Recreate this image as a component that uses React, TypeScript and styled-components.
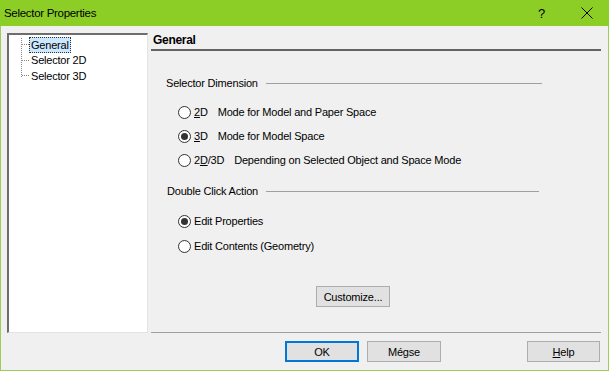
import React from "react";
import styled, { createGlobalStyle } from "styled-components";

const Global = createGlobalStyle`
  html, body { margin: 0; padding: 0; background: #f0f0f0; }
  body { font-family: "Liberation Sans", Arial, sans-serif; font-size: 11px; color: #000; letter-spacing: -0.2px; }
  * { box-sizing: border-box; }
`;

const Window = styled.div`
  width: 609px;
  height: 371px;
  display: flex;
  flex-direction: column;
  background: #f0f0f0;
  border: 1px solid #9ccc5c;
  border-top: none;
`;

const TitleBar = styled.div`
  height: 26px;
  background: #8cce26;
  display: flex;
  align-items: center;
  padding-left: 4px;
  margin: 0 -1px;
  font-size: 11.5px;
  letter-spacing: -0.3px;
`;

const Title = styled.div`
  flex: 1;
`;

const TitleButton = styled.div`
  width: 45px;
  height: 26px;
  display: flex;
  align-items: center;
  justify-content: center;
  font-size: 13px;
`;

const Body = styled.div`
  flex: 1;
  display: flex;
  padding: 7px 7px 0 6px;
`;

const Tree = styled.div`
  width: 141px;
  height: 300px;
  background: #fff;
  border-top: 2px solid #6d6d6d;
  border-left: 2px solid #6d6d6d;
  border-right: 1px solid #e3e3e3;
  border-bottom: 1px solid #e3e3e3;
  padding: 2px 0 0 0;
  position: relative;
`;

const TreeItem = styled.div`
  position: relative;
  height: 15.5px;
  display: flex;
  align-items: center;
  padding-left: 20px;
`;

const TreeLabel = styled.span<{ $selected?: boolean }>`
  padding: 0 1px;
  line-height: 14px;
  border: 1px ${(p) => (p.$selected ? "dotted #333" : "solid transparent")};
  background: ${(p) => (p.$selected ? "#cce8ff" : "transparent")};
`;

const TreeConnectors = styled.svg`
  position: absolute;
  left: 0;
  top: 0;
`;

const Pane = styled.div`
  flex: 1;
  display: flex;
  flex-direction: column;
  padding-left: 3px;
`;

const PaneHeader = styled.div`
  font-weight: bold;
  font-size: 12px;
  letter-spacing: -0.3px;
  padding: 0 0 2px 2px;
  border-bottom: 2px solid #646464;
`;

const PaneContent = styled.div`
  flex: 1;
  display: flex;
  flex-direction: column;
  padding: 25px 0 0 15px;
  border-bottom: 1px solid #a0a0a0;
`;

const Group = styled.div<{ $width: number }>`
  display: flex;
  align-items: center;
  gap: 8px;
  width: ${(p) => p.$width}px;
  height: 14px;
  margin-left: ${(p) => (p.$width > 375 ? 0 : 1)}px;
`;

const GroupLine = styled.div`
  flex: 1;
  height: 1px;
  background: #a0a0a0;
`;

const RadioList = styled.div<{ $gap: number }>`
  display: flex;
  flex-direction: column;
  gap: ${(p) => p.$gap}px;
  padding-left: 12px;
`;

const RadioRow = styled.div`
  display: flex;
  align-items: center;
  height: 14px;
`;

const RadioCircle = styled.span<{ $checked?: boolean }>`
  width: 13px;
  height: 13px;
  border-radius: 50%;
  border: 1px solid #333;
  background: #fff;
  display: inline-flex;
  align-items: center;
  justify-content: center;
  margin-right: 3px;
  &::after {
    content: "";
    width: 7px;
    height: 7px;
    border-radius: 50%;
    background: ${(p) => (p.$checked ? "#333" : "transparent")};
  }
`;

const Key = styled.span`
  display: inline-block;
  margin-right: 10px;
`;

const U = styled.span`
  text-decoration: underline;
`;

const Button = styled.button<{ $default?: boolean; $w: number }>`
  font-family: "Liberation Sans", Arial, sans-serif;
  font-size: 11px;
  letter-spacing: -0.2px;
  width: ${(p) => p.$w}px;
  height: 21px;
  background: #e1e1e1;
  border: ${(p) => (p.$default ? "2px solid #0078d7" : "1px solid #adadad")};
  color: #000;
  padding: 0;
`;

const CustomizeRow = styled.div`
  display: flex;
  padding-left: 150px;
  margin-top: 33px;
`;

const Footer = styled.div`
  height: 38px;
  display: flex;
  align-items: center;
  padding: 1px 8px 1px 284px;
  gap: 8px;
`;

const Spacer = styled.div`
  flex: 1;
`;

export default function App() {
  return (
    <>
      <Global />
      <Window>
        <TitleBar>
          <Title>Selector Properties</Title>
          <TitleButton>?</TitleButton>
          <TitleButton>
            <svg width="12" height="12" viewBox="0 0 12 12">
              <path d="M0.5 0.5 L11.5 11.5 M11.5 0.5 L0.5 11.5" stroke="#000" strokeWidth="1" />
            </svg>
          </TitleButton>
        </TitleBar>
        <Body>
          <Tree>
            <TreeConnectors width="24" height="60">
              <path
                d="M12.5 3 V42 M13 9.5 H20 M13 25.5 H20 M13 40.5 H20"
                stroke="#888"
                strokeWidth="1"
                strokeDasharray="1 1"
                fill="none"
              />
            </TreeConnectors>
            <TreeItem>
              <TreeLabel $selected>General</TreeLabel>
            </TreeItem>
            <TreeItem>
              <TreeLabel>Selector 2D</TreeLabel>
            </TreeItem>
            <TreeItem>
              <TreeLabel>Selector 3D</TreeLabel>
            </TreeItem>
          </Tree>
          <Pane>
            <PaneHeader>General</PaneHeader>
            <PaneContent>
              <Group $width={376}>
                <span>Selector Dimension</span>
                <GroupLine />
              </Group>
              <div style={{ height: 15 }} />
              <RadioList $gap={10}>
                <RadioRow>
                  <RadioCircle />
                  <Key><U>2</U>D</Key>
                  <span>Mode for Model and Paper Space</span>
                </RadioRow>
                <RadioRow>
                  <RadioCircle $checked />
                  <Key><U>3</U>D</Key>
                  <span>Mode for Model Space</span>
                </RadioRow>
                <RadioRow>
                  <RadioCircle />
                  <Key>2<U>D</U>/3D</Key>
                  <span>Depending on Selected Object and Space Mode</span>
                </RadioRow>
              </RadioList>
              <div style={{ height: 17 }} />
              <Group $width={372}>
                <span>Double Click Action</span>
                <GroupLine />
              </Group>
              <div style={{ height: 16 }} />
              <RadioList $gap={11}>
                <RadioRow>
                  <RadioCircle $checked />
                  <span>Edit Properties</span>
                </RadioRow>
                <RadioRow>
                  <RadioCircle />
                  <span>Edit Contents (Geometry)</span>
                </RadioRow>
              </RadioList>
              <CustomizeRow>
                <Button $w={74}>Customize...</Button>
              </CustomizeRow>
            </PaneContent>
          </Pane>
        </Body>
        <Footer>
          <Button $default $w={74}>OK</Button>
          <Button $w={74}>Mégse</Button>
          <Spacer />
          <Button $w={73}>
            <U>H</U>elp
          </Button>
        </Footer>
      </Window>
    </>
  );
}
